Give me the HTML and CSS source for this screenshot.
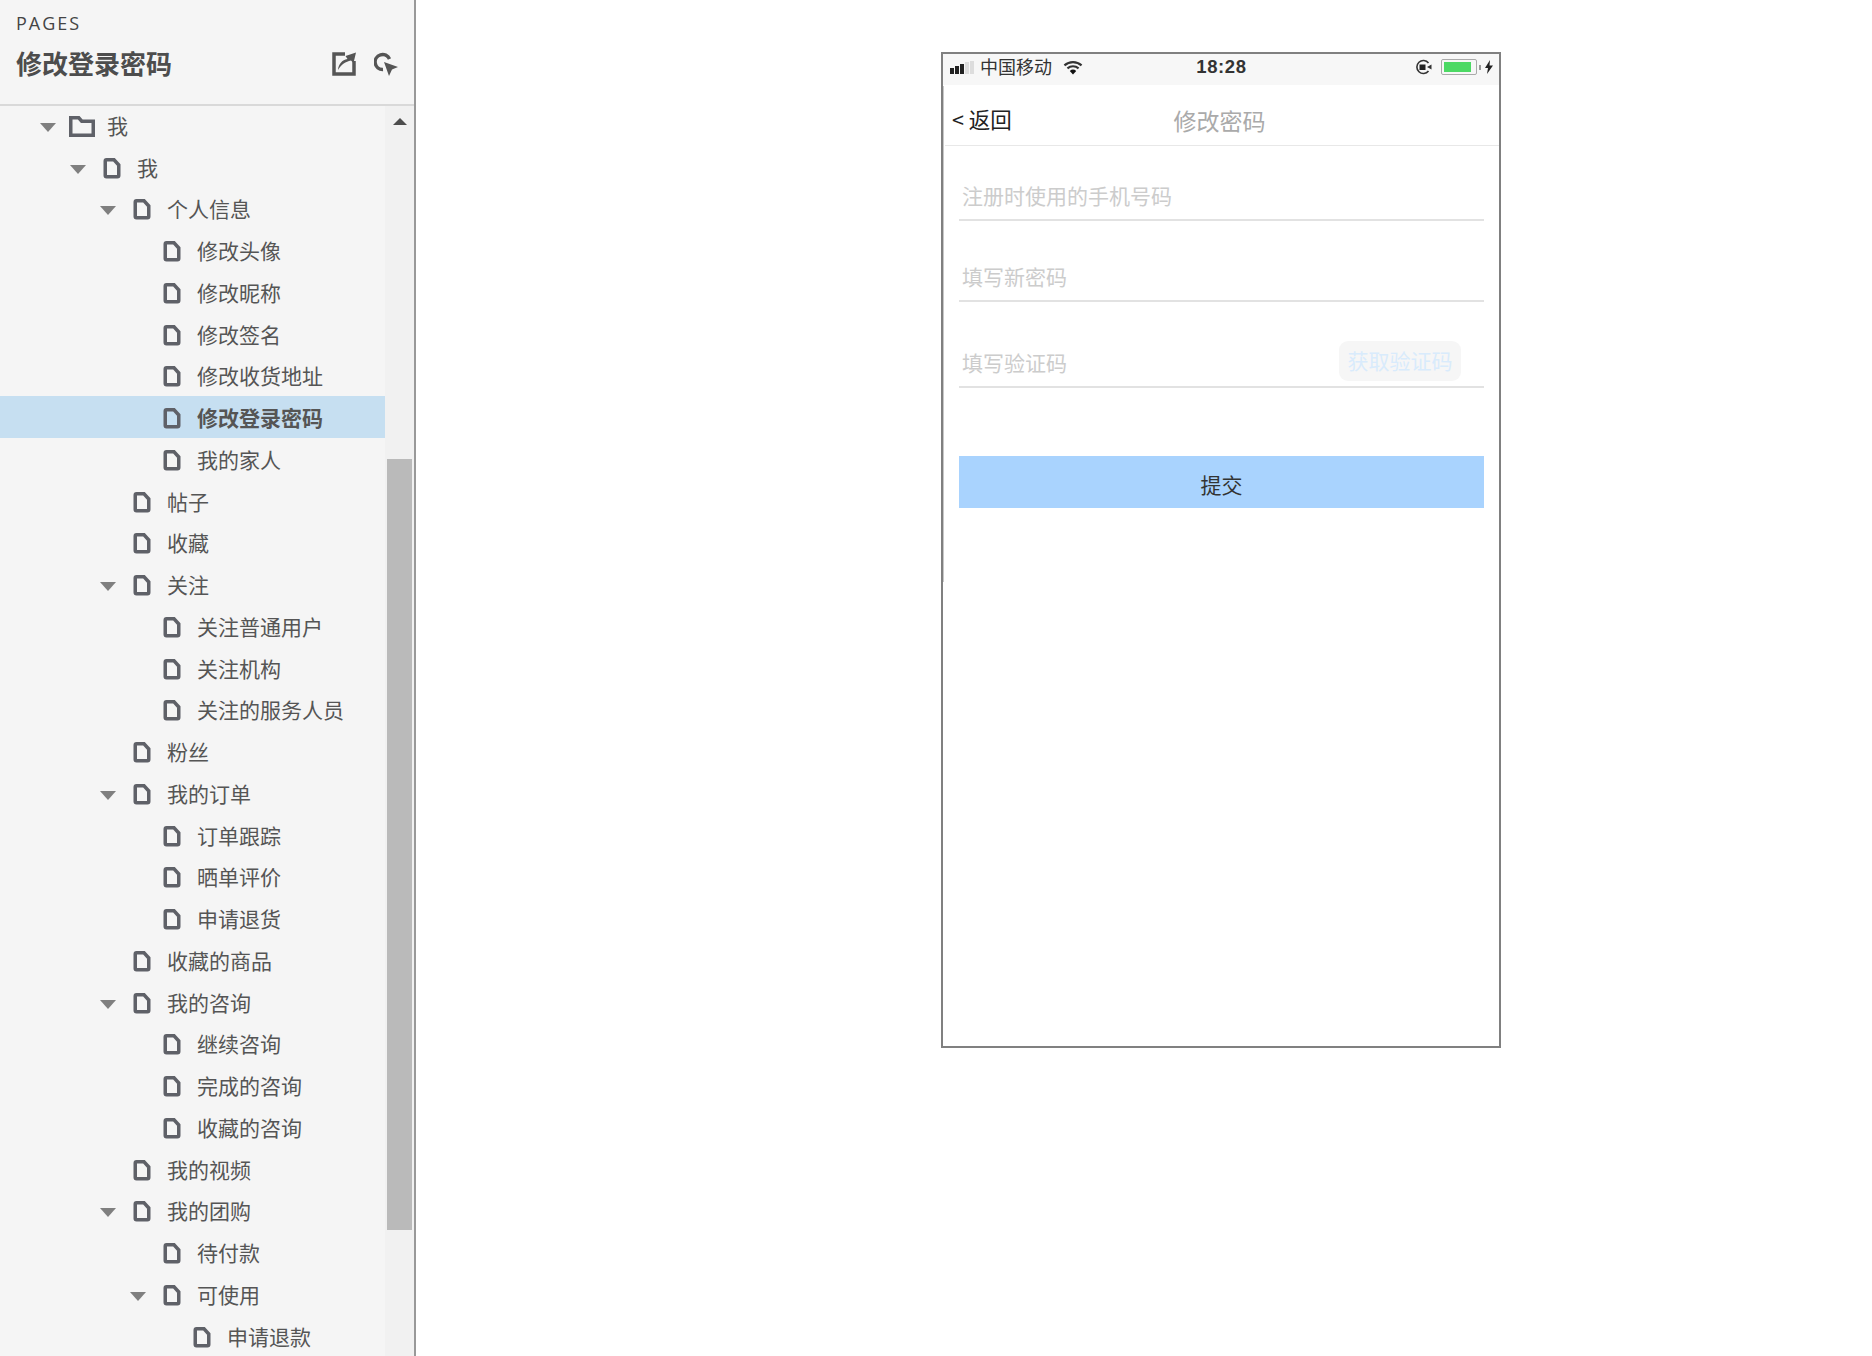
FILE: index.html
```html
<!DOCTYPE html>
<html lang="en">
<head>
  <meta charset="UTF-8" />
  <title>修改登录密码</title>
  <link rel="stylesheet" href="styles.css">
</head>
<body>
  <svg class="defs" width="0" height="0">
    <symbol id="file" viewBox="0 0 17 21">
      <path d="M1.750 3a1.250 1.250 0 0 1 1.250-1.250h7.500l4.750 5.250v10.500a1.250 1.250 0 0 1-1.250 1.250H3a1.250 1.250 0 0 1-1.250-1.250z" fill="none" stroke="#5f6168" stroke-width="3.500"/>
    </symbol>
    <symbol id="folder" viewBox="0 0 26 21">
      <path d="M1.750 19.250V1.750h8l3 3.500h11.500v14z" fill="none" stroke="#5f6168" stroke-width="3.500"/>
    </symbol>
  </svg>

  <aside class="sidebar">
    <header class="side-head">
      <div class="side-label">PAGES</div>
      <div class="side-title-row">
        <h1 class="side-title">修改登录密码</h1>
        <svg class="head-icon" width="24" height="24" viewBox="0 0 24 24">
          <path d="M13 2H2v20h20V9" fill="none" stroke="#555" stroke-width="3.500"/>
          <path d="M6 18c.5-6 4-10 9.500-11L13.500 4 24 .5 21.500 11l-2.500-2.500c-5.500 1-9.500 4-13 9.500z" fill="#555"/>
        </svg>
        <svg class="head-icon" width="24" height="24" viewBox="0 0 24 24">
          <path d="M9 17.500A7.500 7.500 0 1 1 15.500 7" fill="none" stroke="#555" stroke-width="3.500"/>
          <path d="M10 10l14 5-6 2.500-3 6.500z" fill="#555"/>
        </svg>
      </div>
    </header>

    <div class="tree-wrap">
      <ul class="tree">
        <li class="row lv0"><i class="tog"></i><svg class="ico folder"><use href="#folder"/></svg><span>我</span></li>
        <li class="row lv1"><i class="tog"></i><svg class="ico"><use href="#file"/></svg><span>我</span></li>
        <li class="row lv2"><i class="tog"></i><svg class="ico"><use href="#file"/></svg><span>个人信息</span></li>
        <li class="row lv3"><i class="tog none"></i><svg class="ico"><use href="#file"/></svg><span>修改头像</span></li>
        <li class="row lv3"><i class="tog none"></i><svg class="ico"><use href="#file"/></svg><span>修改昵称</span></li>
        <li class="row lv3"><i class="tog none"></i><svg class="ico"><use href="#file"/></svg><span>修改签名</span></li>
        <li class="row lv3"><i class="tog none"></i><svg class="ico"><use href="#file"/></svg><span>修改收货地址</span></li>
        <li class="row lv3 selected"><i class="tog none"></i><svg class="ico"><use href="#file"/></svg><span>修改登录密码</span></li>
        <li class="row lv3"><i class="tog none"></i><svg class="ico"><use href="#file"/></svg><span>我的家人</span></li>
        <li class="row lv2"><i class="tog none"></i><svg class="ico"><use href="#file"/></svg><span>帖子</span></li>
        <li class="row lv2"><i class="tog none"></i><svg class="ico"><use href="#file"/></svg><span>收藏</span></li>
        <li class="row lv2"><i class="tog"></i><svg class="ico"><use href="#file"/></svg><span>关注</span></li>
        <li class="row lv3"><i class="tog none"></i><svg class="ico"><use href="#file"/></svg><span>关注普通用户</span></li>
        <li class="row lv3"><i class="tog none"></i><svg class="ico"><use href="#file"/></svg><span>关注机构</span></li>
        <li class="row lv3"><i class="tog none"></i><svg class="ico"><use href="#file"/></svg><span>关注的服务人员</span></li>
        <li class="row lv2"><i class="tog none"></i><svg class="ico"><use href="#file"/></svg><span>粉丝</span></li>
        <li class="row lv2"><i class="tog"></i><svg class="ico"><use href="#file"/></svg><span>我的订单</span></li>
        <li class="row lv3"><i class="tog none"></i><svg class="ico"><use href="#file"/></svg><span>订单跟踪</span></li>
        <li class="row lv3"><i class="tog none"></i><svg class="ico"><use href="#file"/></svg><span>晒单评价</span></li>
        <li class="row lv3"><i class="tog none"></i><svg class="ico"><use href="#file"/></svg><span>申请退货</span></li>
        <li class="row lv2"><i class="tog none"></i><svg class="ico"><use href="#file"/></svg><span>收藏的商品</span></li>
        <li class="row lv2"><i class="tog"></i><svg class="ico"><use href="#file"/></svg><span>我的咨询</span></li>
        <li class="row lv3"><i class="tog none"></i><svg class="ico"><use href="#file"/></svg><span>继续咨询</span></li>
        <li class="row lv3"><i class="tog none"></i><svg class="ico"><use href="#file"/></svg><span>完成的咨询</span></li>
        <li class="row lv3"><i class="tog none"></i><svg class="ico"><use href="#file"/></svg><span>收藏的咨询</span></li>
        <li class="row lv2"><i class="tog none"></i><svg class="ico"><use href="#file"/></svg><span>我的视频</span></li>
        <li class="row lv2"><i class="tog"></i><svg class="ico"><use href="#file"/></svg><span>我的团购</span></li>
        <li class="row lv3"><i class="tog none"></i><svg class="ico"><use href="#file"/></svg><span>待付款</span></li>
        <li class="row lv3"><i class="tog"></i><svg class="ico"><use href="#file"/></svg><span>可使用</span></li>
        <li class="row lv4"><i class="tog none"></i><svg class="ico"><use href="#file"/></svg><span>申请退款</span></li>
      </ul>
      <div class="scrollbar">
        <i class="scroll-up"></i>
        <div class="scroll-thumb"></div>
      </div>
    </div>
  </aside>

  <main class="canvas">
    <div class="phone">
      <div class="status">
        <div class="status-left">
          <span class="signal"><i class="on s1"></i><i class="on s2"></i><i class="on s3"></i><i class="s4"></i><i class="s5"></i></span>
          <span class="carrier">中国移动</span>
          <svg class="wifi" width="20" height="15" viewBox="0 0 18 14">
            <path d="M1 5a12 12 0 0 1 16 0M3.800 7.800a8 8 0 0 1 10.400 0" fill="none" stroke="#333" stroke-width="2"/>
            <path d="M6 10.200a4.500 4.500 0 0 1 6 0L9 13.500z" fill="#111"/>
          </svg>
        </div>
        <span class="clock">18:28</span>
        <div class="status-right">
          <svg class="lock" width="18" height="16" viewBox="0 0 18 16">
            <path d="M14.500 4A6.500 6.500 0 1 0 14.500 12" fill="none" stroke="#333" stroke-width="1.600"/>
            <path d="M13 8l4.500-2.500v5z" fill="#333"/>
            <rect x="5.500" y="5.500" width="6" height="5.500" fill="#222"/>
          </svg>
          <span class="battery"><i></i></span><i class="battery-tip"></i>
          <svg width="8" height="14" viewBox="0 0 8 14"><path d="M5 0L0 8h3l-1 6 6-8.500H4.500z" fill="#222"/></svg>
        </div>
      </div>

      <div class="nav">
        <span class="back">&lt; 返回</span>
        <span class="nav-title">修改密码</span>
      </div>

      <form class="form">
        <div class="field first">注册时使用的手机号码</div>
        <div class="field second">填写新密码</div>
        <div class="field third">填写验证码<span class="get-code">获取验证码</span></div>
        <div class="submit">提交</div>
      </form>
      <i class="phone-edge"></i>
    </div>
  </main>
</body>
</html>
```

FILE: styles.css
```css
* { box-sizing: border-box; }
html, body { height: 100%; }
body {
  margin: 0;
  display: flex;
  height: 1356px;
  overflow: hidden;
  background: #fff;
  font-family: "Noto Sans CJK SC", "Noto Sans", sans-serif;
}
.defs { position: absolute; }

/* left page tree */
.sidebar {
  width: 416px;
  flex: none;
  background: #f5f5f5;
  border-right: 2px solid #999;
  display: flex;
  flex-direction: column;
  overflow: hidden;
}
.side-head {
  height: 106px;
  flex: none;
  padding: 11px 16px 0;
  border-bottom: 2px solid #d9d9d9;
}
.side-label {
  font-family: "Open Sans", sans-serif;
  font-size: 18px;
  line-height: 24px;
  letter-spacing: 2px;
  color: #444;
}
.side-title-row {
  display: flex;
  align-items: center;
  gap: 18px;
  margin-top: 4px;
}
.side-title {
  margin: 0 auto 0 0;
  font-size: 26px;
  line-height: 48px;
  font-weight: 700;
  color: #4d4d4d;
}
.head-icon { flex: none; margin-top: 2px; }

.tree-wrap { flex: 1; display: flex; min-height: 0; }
.tree {
  width: 385px;
  flex: none;
  margin: -2px 0 0;
  padding: 0;
  list-style: none;
}
.row {
  height: 41.76px;
  display: flex;
  align-items: center;
  font-size: 21px;
  color: #555;
}
.lv0 { padding-left: 33px; }
.lv1 { padding-left: 63px; }
.lv2 { padding-left: 93px; }
.lv3 { padding-left: 123px; }
.lv4 { padding-left: 153px; }
.row.selected { background: #c6dff1; font-weight: 700; }
.tog {
  width: 30px;
  margin: 5px 3px 0 0;
  flex: none;
  display: flex;
  justify-content: center;
}
.tog::before {
  content: "";
  border: 8px solid transparent;
  border-top: 9px solid #7f7f7f;
  border-bottom: 0;
}
.tog.none::before { display: none; }
.ico { width: 30px; height: 21px; margin: 3px 10px 0 1px; flex: none; }

.scrollbar {
  flex: 1;
  background: #f1f1f1;
  padding: 12px 2px 0;
  display: flex;
  flex-direction: column;
  align-items: center;
}
.scroll-up {
  border: 7px solid transparent;
  border-bottom: 7px solid #4d4d4d;
  border-top: 0;
  height: 0;
  flex: none;
}
.scroll-thumb {
  width: 25px;
  height: 771px;
  margin-top: 334px;
  flex: none;
  background: #bababa;
}

/* phone preview */
.canvas { flex: 1; padding: 52px 0 0 525px; }
.phone {
  position: relative;
  width: 560px;
  height: 996px;
  border: 2px solid #808080;
  background: #fff;
}
.phone-edge {
  position: absolute;
  left: 0;
  top: 32px;
  width: 1px;
  height: 496px;
  background: #c8c8c8;
}
.status {
  height: 31px;
  padding: 0 6px 5px 7px;
  background: #f7f7f7;
  display: grid;
  grid-template-columns: 1fr auto 1fr;
  align-items: center;
  font-size: 18px;
  color: #333;
}
.status-left { display: flex; align-items: center; }
.signal { display: flex; align-items: flex-end; gap: 1.5px; height: 13px; width: 25px; }
.signal i { width: 3.500px; background: #ddd; }
.signal .on { background: #222; }
.s1 { height: 6px; }
.s2 { height: 8px; }
.s3 { height: 10px; }
.s4 { height: 12px; }
.s5 { height: 13px; }
.carrier { margin-left: 5px; line-height: 20px; margin-top: -2px; }
.wifi { margin-left: 11px; }
.clock { font-family: "Liberation Sans", sans-serif; font-weight: 700; font-size: 18.500px; letter-spacing: .6px; color: #333; }
.status-right { display: flex; align-items: center; justify-content: flex-end; }
.lock { margin-right: 9px; }
.battery {
  width: 36px;
  height: 16px;
  border: 1px solid #aaa;
  border-radius: 2px;
  padding: 2px 5px 2px 2px;
  display: flex;
}
.battery i { flex: 1; background: #4cd964; }
.battery-tip { width: 2px; height: 5px; background: #999; margin: 0 4px 0 2px; }

.nav {
  position: relative;
  height: 61px;
  margin: 0 0 0 2px;
  padding: 0 0 0 7px;
  border-bottom: 1px solid #e8e8e8;
  display: flex;
  align-items: center;
  justify-content: center;
}
.back {
  position: absolute;
  left: 7px;
  top: 18px;
  font-size: 21.500px;
  line-height: 32px;
  color: #222;
}
.nav-title { font-size: 23px; line-height: 34px; color: #aaa; margin: 10px 12px 0 0; }

.form { padding: 0 15px 0 16px; }
.field {
  position: relative;
  padding: 0 0 8px 3px;
  font-size: 21px;
  line-height: 32px;
  color: #ccc;
  border-bottom: 2px solid #e2e2e2;
}
.first { margin-top: 33px; }
.second { margin-top: 39px; }
.third { margin-top: 44px; }
.get-code {
  position: absolute;
  right: 23px;
  top: -5px;
  height: 40px;
  padding: 0 8.500px;
  line-height: 38px;
  background: #f6f6f6;
  border-radius: 9px;
  color: #d9ebfc;
}
.submit {
  height: 52px;
  margin-top: 68px;
  background: #a9d3fe;
  color: #333;
  font-size: 21px;
  line-height: 56px;
  text-align: center;
}
```
